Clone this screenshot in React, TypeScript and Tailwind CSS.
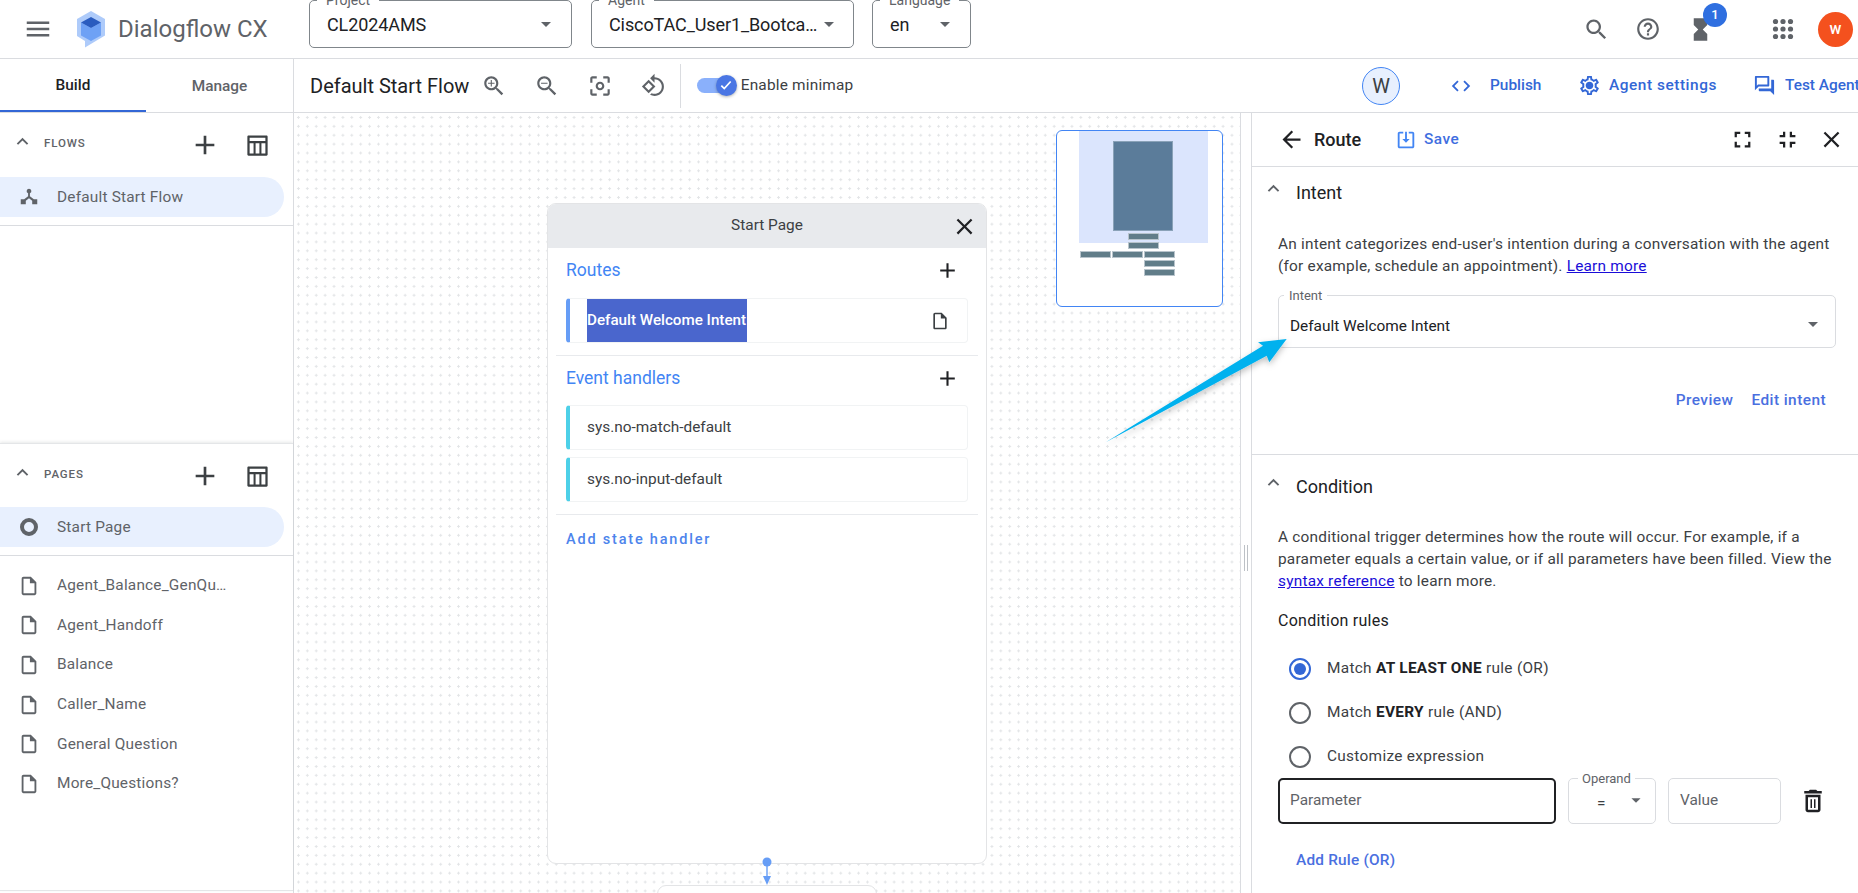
import React from "react";

const P = {
  menu: "M3 18h18v-2H3v2zm0-5h18v-2H3v2zm0-7v2h18V6H3z",
  search: "M15.5 14h-.79l-.28-.27C15.41 12.59 16 11.11 16 9.5 16 5.91 13.09 3 9.5 3S3 5.91 3 9.5 5.91 16 9.5 16c1.61 0 3.09-.59 4.23-1.57l.27.28v.79l5 4.99L20.49 19l-4.99-5zm-6 0C7.01 14 5 11.99 5 9.5S7.01 5 9.5 5 14 7.01 14 9.5 11.99 14 9.5 14z",
  help: "M11 18h2v-2h-2v2zm1-16C6.48 2 2 6.48 2 12s4.48 10 10 10 10-4.48 10-10S17.52 2 12 2zm0 18c-4.41 0-8-3.59-8-8s3.59-8 8-8 8 3.59 8 8-3.59 8-8 8zm0-14c-2.21 0-4 1.79-4 4h2c0-1.1.9-2 2-2s2 .9 2 2c0 2-3 1.75-3 5h2c0-2.25 3-2.5 3-5 0-2.21-1.79-4-4-4z",
  hourglass: "M6 2v6h.01L6 8.01 10 12l-4 4 .01.01H6V22h12v-5.99h-.01L18 16l-4-4 4-3.99-.01-.01H18V2H6z",
  add: "M19 13h-6v6h-2v-6H5v-2h6V5h2v6h6v2z",
  close: "M19 6.41L17.59 5 12 10.59 6.41 5 5 6.41 10.59 12 5 17.59 6.41 19 12 13.41 17.59 19 19 17.59 13.41 12z",
  less: "M12 8l-6 6 1.41 1.41L12 10.83l4.59 4.58L18 14z",
  back: "M20 11H7.83l5.59-5.59L12 4l-8 8 8 8 1.41-1.41L7.83 13H20v-2z",
  full: "M7 14H5v5h5v-2H7v-3zm-2-4h2V7h3V5H5v5zm12 7h-3v2h5v-5h-2v3zM14 5v2h3v3h2V5h-5z",
  exit: "M5 16h3v3h2v-5H5v2zm3-8H5v2h5V5H8v3zm6 11h2v-3h3v-2h-5v5zm2-11V5h-2v5h5V8h-3z",
  file: "M14 2H6c-1.1 0-1.99.9-1.99 2L4 20c0 1.1.89 2 1.99 2H18c1.1 0 2-.9 2-2V8l-6-6zM6 20V4h7v5h5v11H6z",
  zoomIn: "M15.5 14h-.79l-.28-.27C15.41 12.59 16 11.11 16 9.5 16 5.91 13.09 3 9.5 3S3 5.91 3 9.5 5.91 16 9.5 16c1.61 0 3.09-.59 4.23-1.57l.27.28v.79l5 4.99L20.49 19l-4.99-5zm-6 0C7.01 14 5 11.99 5 9.5S7.01 5 9.5 5 14 7.01 14 9.5 11.99 14 9.5 14zm3-4h-2.5v2.5H9V10H6.5V9H9V6.5h1V9h2.5v1z",
  zoomOut: "M15.5 14h-.79l-.28-.27C15.41 12.59 16 11.11 16 9.5 16 5.91 13.09 3 9.5 3S3 5.91 3 9.5 5.91 16 9.5 16c1.61 0 3.09-.59 4.23-1.57l.27.28v.79l5 4.99L20.49 19l-4.99-5zm-6 0C7.01 14 5 11.99 5 9.5S7.01 5 9.5 5 14 7.01 14 9.5 11.99 14 9.5 14zM6.5 9h6v1h-6z",
  focus: "M5 15H3v4c0 1.1.9 2 2 2h4v-2H5v-4zM5 5h4V3H5c-1.1 0-2 .9-2 2v4h2V5zm14-2h-4v2h4v4h2V5c0-1.1-.9-2-2-2zm0 16h-4v2h4c1.1 0 2-.9 2-2v-4h-2v4zM12 8c-2.21 0-4 1.79-4 4s1.79 4 4 4 4-1.79 4-4-1.79-4-4-4zm0 6c-1.1 0-2-.9-2-2s.9-2 2-2 2 .9 2 2-.9 2-2 2z",
  rotate: "M7.34 6.41L.86 12.9l6.49 6.48 6.49-6.48-6.5-6.49zM3.69 12.9l3.66-3.66L11 12.9l-3.66 3.66-3.65-3.66zm15.67-6.26C17.61 4.88 15.3 4 13 4V.76L8.76 5 13 9.24V6c1.79 0 3.58.68 4.95 2.05 2.73 2.73 2.73 7.17 0 9.9C16.58 19.32 14.79 20 13 20c-.97 0-1.94-.21-2.84-.61l-1.49 1.49C10.02 21.62 11.51 22 13 22c2.3 0 4.61-.88 6.36-2.64 3.52-3.51 3.52-9.21 0-12.72z",
  code: "M9.4 16.6L4.8 12l4.6-4.6L8 6l-6 6 6 6 1.4-1.4zm5.2 0l4.6-4.6-4.6-4.6L16 6l6 6-6 6-1.4-1.4z",
  gear: "M19.43 12.98c.04-.32.07-.64.07-.98 0-.34-.03-.66-.07-.98l2.11-1.65c.19-.15.24-.42.12-.64l-2-3.46c-.09-.16-.26-.25-.44-.25-.06 0-.12.01-.17.03l-2.49 1c-.52-.4-1.08-.73-1.69-.98l-.38-2.65C14.46 2.18 14.25 2 14 2h-4c-.25 0-.46.18-.49.42l-.38 2.65c-.61.25-1.17.59-1.69.98l-2.49-1c-.06-.02-.12-.03-.18-.03-.17 0-.34.09-.43.25l-2 3.46c-.13.22-.07.49.12.64l2.11 1.65c-.04.32-.07.65-.07.98 0 .33.03.66.07.98l-2.11 1.65c-.19.15-.24.42-.12.64l2 3.46c.09.16.26.25.44.25.06 0 .12-.01.17-.03l2.49-1c.52.4 1.08.73 1.69.98l.38 2.65c.03.24.24.42.49.42h4c.25 0 .46-.18.49-.42l.38-2.65c.61-.25 1.17-.59 1.69-.98l2.49 1c.06.02.12.03.18.03.17 0 .34-.09.43-.25l2-3.46c.12-.22.07-.49-.12-.64l-2.11-1.65zm-1.98-1.71c.04.31.05.52.05.73 0 .21-.02.43-.05.73l-.14 1.13.89.7 1.08.84-.7 1.21-1.27-.51-1.04-.42-.9.68c-.43.32-.84.56-1.25.73l-1.06.43-.16 1.13-.2 1.35h-1.4l-.19-1.35-.16-1.13-1.06-.43c-.43-.18-.83-.41-1.23-.71l-.91-.7-1.06.43-1.27.51-.7-1.21 1.08-.84.89-.7-.14-1.13c-.03-.31-.05-.54-.05-.74s.02-.43.05-.73l.14-1.13-.89-.7-1.08-.84.7-1.21 1.27.51 1.04.42.9-.68c.43-.32.84-.56 1.25-.73l1.06-.43.16-1.13.2-1.35h1.39l.19 1.35.16 1.13 1.06.43c.43.18.83.41 1.23.71l.91.7 1.06-.43 1.27-.51.7 1.21-1.07.85-.89.7.14 1.13zM12 8c-2.21 0-4 1.79-4 4s1.79 4 4 4 4-1.79 4-4-1.79-4-4-4z",
  chat: "M15 4v7H5.17L4 12.17V4h11m1-2H3c-.55 0-1 .45-1 1v14l4-4h10c.55 0 1-.45 1-1V3c0-.55-.45-1-1-1zm5 4h-2v9H6v2c0 .55.45 1 1 1h11l4 4V7c0-.55-.45-1-1-1z",
  trash: "M6 19c0 1.1.9 2 2 2h8c1.1 0 2-.9 2-2V7H6v12zM8 9h8v10H8V9zm7.5-5l-1-1h-5l-1 1H5v2h14V4h-3.5zM10 10.5h1.2v7H10zM12.8 10.5H14v7h-1.2z",
  caret: "M7 10l5 5 5-5z",
  save: "M5 3h4v2H5v14h14V5h-4V3h4c1.1 0 2 .9 2 2v14c0 1.1-.9 2-2 2H5c-1.1 0-2-.9-2-2V5c0-1.1.9-2 2-2zm6 0h2v8h3l-4 4-4-4h3V3z",
  table: "M4 3h16c.55 0 1 .45 1 1v16c0 .55-.45 1-1 1H4c-.55 0-1-.45-1-1V4c0-.55.45-1 1-1zm1 2v3h14V5H5zm0 5v9h3.5v-9H5zm5.3 0v9h3.4v-9h-3.4zm5.2 0v9H19v-9h-3.5z",
  flow: "M12 3a2.6 2.6 0 0 1 1 5v3.2l4.3 3.3H21V20h-5.5v-4l-3.5-2.7L8.5 16v4H3v-5.5h3.7l4.3-3.3V8a2.6 2.6 0 0 1 1-5z",
};

function Ic({ d, s = 24, c = "text-[#5f6368]" }: { d: string; s?: number; c?: string }) {
  return (
    <svg viewBox="0 0 24 24" width={s} height={s} fill="currentColor" className={`shrink-0 ${c}`}>
      <path d={d} />
    </svg>
  );
}

function TopSelect({ label, value, w, ml }: { label: string; value: string; w: string; ml: string }) {
  return (
    <div className={`relative h-[48px] self-start shrink-0 rounded-[5px] border border-[#80868b] ${w} ${ml}`}>
      <span className="absolute left-[7px] top-[-9px] bg-white px-[9px] text-[14px] leading-[16px] text-[#5f6368]">{label}</span>
      <div className="flex h-full items-center pl-[17px] pr-[13px]">
        <span className="flex-1 whitespace-nowrap text-[18px] tracking-[-0.1px] text-[#202124]">{value}</span>
        <Ic d={P.caret} s={24} />
      </div>
    </div>
  );
}

function SectionHead({ title }: { title: string }) {
  return (
    <div className="flex h-[60px] items-center">
      <div className="ml-[11px] -mt-[4px]"><Ic d={P.less} s={23} /></div>
      <span className="ml-[10px] w-[134px] pt-[1px] text-[11.5px] font-medium tracking-[0.9px] text-[#5f6368]">{title}</span>
      <div className="mt-[4px] flex w-[53px] justify-center"><Ic d={P.add} s={32} c="text-[#3c4043]" /></div>
      <div className="mt-[4px] flex w-[53px] justify-center"><Ic d={P.table} s={27} c="text-[#3c4043]" /></div>
    </div>
  );
}

function SelectedRow({ icon, text }: { icon: React.ReactNode; text: string }) {
  return (
    <div className="flex h-[40px] w-[284px] items-center rounded-r-[20px] bg-[#e8f0fe]">
      <div className="flex w-[57px] justify-center">{icon}</div>
      <span className="pt-[1px] text-[15.4px] tracking-[0.2px] text-[#5f6368]">{text}</span>
    </div>
  );
}

const pages = ["Agent_Balance_GenQu…", "Agent_Handoff", "Balance", "Caller_Name", "General Question", "More_Questions?"];

function Sidebar() {
  return (
    <aside className="w-[294px] shrink-0 border-r border-[#dadce0] bg-white">
      <div className="h-[330px]">
        <SectionHead title="FLOWS" />
        <div className="pt-[4px] pb-[8px] border-b border-[#dadce0]">
          <SelectedRow icon={<Ic d={P.flow} s={22} />} text="Default Start Flow" />
        </div>
      </div>
      <div className="h-[448px] border-t border-b border-[#e4e6e8] shadow-[0_-1px_3px_rgba(60,64,67,0.12)]">
        <SectionHead title="PAGES" />
        <div className="mt-[3px] pb-[8px] border-b border-[#dadce0]">
          <SelectedRow
            icon={<span className="block h-[18px] w-[18px] rounded-full border-[4px] border-[#5f6368]" />}
            text="Start Page"
          />
        </div>
        <div className="pt-[10px]">
          {pages.map((p) => (
            <div key={p} className="flex h-[39.6px] items-center">
              <div className="flex w-[57px] justify-center"><Ic d={P.file} s={22} /></div>
              <span className="text-[15.4px] tracking-[0.2px] text-[#5f6368]">{p}</span>
            </div>
          ))}
        </div>
      </div>
    </aside>
  );
}

function Handler({ text, bar, children }: { text: string; bar: string; children?: React.ReactNode }) {
  return (
    <div className={`flex h-[45px] items-center rounded-[4px] border border-[#f1f3f4] border-l-[4px] ${bar}`}>
      {children ?? <span className="pl-[17px] pt-[1px] text-[15.4px] text-[#3c4043]">{text}</span>}
    </div>
  );
}

function StartPageCard() {
  return (
    <div className="absolute left-[253px] top-[90px] h-[661px] w-[440px] rounded-[9px] border border-[#e3e4e6] bg-white">
      <div className="relative flex h-[44px] items-center justify-center rounded-t-[8px] bg-[#e8eaed] text-[15.4px] text-[#3c4043]">
        Start Page
        <div className="absolute left-[403px] top-[9px]"><Ic d={P.close} s={27} c="text-[#202124]" /></div>
      </div>
      <div className="px-[18px]">
        <div className="flex h-[50px] items-center justify-between pb-[6px] pr-[8px]">
          <span className="text-[17.5px] text-[#4285f4]">Routes</span>
          <Ic d={P.add} s={25} c="text-[#202124]" />
        </div>
        <Handler text="" bar="border-l-[#669df6]">
          <span className="ml-[17px] flex h-full w-[160px] items-center whitespace-nowrap bg-[#4a66cd] text-[15.2px] font-medium text-white">Default Welcome Intent</span>
          <div className="ml-auto mr-[17px]"><Ic d={P.file} s={20} c="text-[#3c4043]" /></div>
        </Handler>
      </div>
      <div className="mx-[8px] mt-[12px] border-t border-[#e8eaed]" />
      <div className="px-[18px]">
        <div className="flex h-[49px] items-center justify-between pb-[4px] pr-[8px]">
          <span className="text-[17.5px] text-[#4285f4]">Event handlers</span>
          <Ic d={P.add} s={25} c="text-[#202124]" />
        </div>
        <div className="flex flex-col gap-[7px]">
          <Handler text="sys.no-match-default" bar="border-l-[#4dd0e8]" />
          <Handler text="sys.no-input-default" bar="border-l-[#4dd0e8]" />
        </div>
      </div>
      <div className="mx-[8px] mt-[12px] border-t border-[#e8eaed]" />
      <div className="px-[18px] pt-[14px] text-[14.5px] font-medium tracking-[1.8px] text-[#4d84ec]">Add state handler</div>
    </div>
  );
}

function Minimap() {
  const bar = "absolute h-[7px] w-[31px] bg-[#617d89] border border-[#b8c4cc]";
  return (
    <div className="absolute left-[762px] top-[17px] h-[177px] w-[167px] rounded-[6px] border border-[#4285f4] bg-white">
      <div className="absolute left-[22px] top-0 h-[112px] w-[129px] bg-[#dbe5fd]" />
      <div className="absolute left-[56px] top-[10px] h-[90px] w-[60px] border border-[#8aa2b8] bg-[#5b7c9a]" />
      <div className={`${bar} left-[71px] top-[102px] bg-[#5b7c9a]`} />
      <div className={`${bar} left-[71px] top-[111px]`} />
      <div className={`${bar} left-[23px] top-[120px]`} />
      <div className={`${bar} left-[55px] top-[120px]`} />
      <div className={`${bar} left-[87px] top-[120px]`} />
      <div className={`${bar} left-[87px] top-[129px]`} />
      <div className={`${bar} left-[87px] top-[138px]`} />
    </div>
  );
}

function Canvas() {
  return (
    <main className="relative w-[947px] shrink-0 overflow-hidden border-r border-[#dadce0] bg-white bg-[radial-gradient(#e3e5e7_1px,transparent_1.2px)] bg-[size:8.9px_8.9px]">
      <StartPageCard />
      <svg className="absolute left-[465px] top-[744px]" width="16" height="30" viewBox="0 0 16 30">
        <circle cx="8" cy="5" r="4.5" fill="#669df6" />
        <rect x="7.3" y="5" width="1.4" height="16" fill="#669df6" />
        <path d="M4 19h8l-4 9z" fill="#669df6" />
      </svg>
      <div className="absolute left-[363px] top-[772px] h-[40px] w-[220px] rounded-[9px] border border-[#e3e4e6] bg-white" />
      <Minimap />
    </main>
  );
}

function Radio({ on, children }: { on?: boolean; children: React.ReactNode }) {
  return (
    <div className="flex h-[44px] items-center pl-[11px]">
      <span className={`flex h-[22px] w-[22px] items-center justify-center rounded-full border-2 ${on ? "border-[#3367d6]" : "border-[#5f6368]"}`}>
        {on && <span className="h-[12px] w-[12px] rounded-full bg-[#3367d6]" />}
      </span>
      <span className="ml-[16px] text-[15.4px] tracking-[0.3px] text-[#3c4043]">{children}</span>
    </div>
  );
}

function PanelSectionTitle({ children, h }: { children: string; h: string }) {
  return (
    <div className={`flex items-center ${h}`}>
      <div className="ml-[10px] -mt-[8px]"><Ic d={P.less} s={23} /></div>
      <span className="ml-[11px] text-[18px] text-[#202124]">{children}</span>
    </div>
  );
}

function Panel() {
  return (
    <section className="flex-1 overflow-hidden border-l border-[#dadce0] bg-white">
      <div className="flex h-[54px] items-center border-b border-[#dadce0]">
        <div className="ml-[26px]"><Ic d={P.back} s={27} c="text-[#202124]" /></div>
        <span className="ml-[9px] w-[57px] text-[18px] font-medium text-[#202124]">Route</span>
        <div className="ml-[24px]"><Ic d={P.save} s={22} c="text-[#4285f4]" /></div>
        <span className="ml-[7px] text-[15.4px] font-medium tracking-[0.5px] text-[#3f6ee0]">Save</span>
        <div className="ml-auto flex">
          <div className="flex w-[44.5px] justify-center"><Ic d={P.full} s={27} c="text-[#202124]" /></div>
          <div className="flex w-[44.5px] justify-center"><Ic d={P.exit} s={27} c="text-[#202124]" /></div>
          <div className="mr-[4px] flex w-[44.5px] justify-center"><Ic d={P.close} s={27} c="text-[#202124]" /></div>
        </div>
      </div>

      <div className="h-[288px] border-b border-[#dadce0]">
        <PanelSectionTitle h="h-[51px]">Intent</PanelSectionTitle>
        <div className="ml-[26px] mr-[19px]">
          <p className="mt-[15px] text-[15.4px] leading-[22px] tracking-[0.22px] text-[#3c4043]">
            An intent categorizes end-user's intention during a conversation with the agent (for example, schedule an appointment). <a className="text-[#1a0dd8] underline">Learn more</a>
          </p>
          <div className="relative mt-[18px] flex h-[53px] w-[558px] items-center rounded-[5px] border border-[#dadce0] pl-[11px] pr-[10px]">
            <span className="absolute left-[5px] top-[-8px] bg-white px-[5px] text-[13px] leading-[15px] text-[#5f6368]">Intent</span>
            <span className="flex-1 pt-[10px] text-[15.4px] text-[#202124]">Default Welcome Intent</span>
            <div className="pt-[5px]"><Ic d={P.caret} s={24} /></div>
          </div>
          <div className="mt-[40px] flex justify-end gap-[18px] pr-[13px] text-[15.4px] font-medium leading-[24px] tracking-[0.45px] text-[#4a6fe0]">
            <span>Preview</span>
            <span>Edit intent</span>
          </div>
        </div>
      </div>

      <PanelSectionTitle h="h-[62px]">Condition</PanelSectionTitle>
      <div className="ml-[26px] mr-[18px]">
        <p className="mt-[9px] text-[15.4px] leading-[22px] tracking-[0.22px] text-[#3c4043]">
          A conditional trigger determines how the route will occur. For example, if a parameter equals a certain value, or if all parameters have been filled. View the <a className="text-[#1a0dd8] underline">syntax reference</a> to learn more.
        </p>
        <div className="mt-[17px] text-[16px] leading-[24px] tracking-[0.25px] text-[#202124]">Condition rules</div>
        <div className="mt-[14px]">
          <Radio on>Match <b className="font-bold text-[#202124]">AT LEAST ONE</b> rule (OR)</Radio>
          <Radio>Match <b className="font-bold text-[#202124]">EVERY</b> rule (AND)</Radio>
          <Radio>Customize expression</Radio>
        </div>
        <div className="-mt-[1px] flex h-[46px]">
          <div className="flex w-[278px] items-center rounded-[5px] border-2 border-[#202124] pl-[10px] text-[15.4px] text-[#5f6368]">Parameter</div>
          <div className="relative ml-[12px] flex w-[88px] items-center rounded-[5px] border border-[#dadce0]">
            <span className="absolute left-[9px] top-[-8px] bg-white px-[4px] text-[13px] leading-[15px] text-[#5f6368]">Operand</span>
            <span className="ml-[28px] mt-[6px] text-[15.4px] text-[#3c4043]">=</span>
            <div className="ml-auto mr-[8px] -mt-[2px]"><Ic d={P.caret} s={22} /></div>
          </div>
          <div className="ml-[12px] flex w-[113px] items-center rounded-[5px] border border-[#dadce0] pl-[11px] text-[15.4px] text-[#5f6368]">Value</div>
          <div className="ml-[17px] flex items-center"><Ic d={P.trash} s={30} c="text-[#202124]" /></div>
        </div>
        <div className="ml-[18px] mt-[24px] text-[15.4px] font-medium leading-[24px] tracking-[0.2px] text-[#4a6fe0]">Add Rule (OR)</div>
      </div>
    </section>
  );
}

function TopBar() {
  return (
    <header className="flex h-[59px] shrink-0 items-center border-b border-[#dadce0] bg-white">
      <div className="ml-[23px]"><Ic d={P.menu} s={30} /></div>
      <svg className="ml-[24px]" width="28" height="37" viewBox="0 0 28 37">
        <path d="M14 0l14 8v16.5L8 36.5v-6.6L0 25V8z" fill="#aecbfa" />
        <path d="M4 11.5l10 5.5 10-5.5v13L14 30 4 24.5z" fill="#6ea1f5" />
        <path d="M14 6l10 5.5-10 5.5-10-5.5z" fill="#2a5cbf" />
      </svg>
      <div className="ml-[13px] w-[191px] text-[24px] text-[#5f6368]">Dialogflow CX</div>
      <TopSelect label="Project" value="CL2024AMS" w="w-[263px]" ml="" />
      <TopSelect label="Agent" value="CiscoTAC_User1_Bootca…" w="w-[263px]" ml="ml-[19px]" />
      <TopSelect label="Language" value="en" w="w-[99px]" ml="ml-[18px]" />
      <div className="ml-auto mr-[5px] flex items-center">
        <Ic d={P.search} s={27} />
        <div className="ml-[25px]"><Ic d={P.help} s={26} /></div>
        <div className="relative ml-[26px]">
          <Ic d={P.hourglass} s={27} />
          <span className="absolute left-[16px] top-[-13px] flex h-[24px] w-[24px] items-center justify-center rounded-full bg-[#2f6fe0] text-[13px] font-medium text-white">1</span>
        </div>
        <svg className="ml-[55px] text-[#5f6368]" width="28" height="28" viewBox="0 0 28 28" fill="currentColor">
          {[6.5, 14, 21.5].flatMap((y) => [6.5, 14, 21.5].map((x) => <circle key={`${x}-${y}`} cx={x} cy={y} r="2.6" />))}
        </svg>
        <span className="ml-[21px] flex h-[35px] w-[35px] items-center justify-center rounded-full bg-[#f4511e] text-[16px] font-medium text-white">w</span>
      </div>
    </header>
  );
}

function ToolBar() {
  return (
    <div className="flex h-[54px] shrink-0 border-b border-[#dadce0] bg-white">
      <div className="flex w-[294px] shrink-0 border-r border-[#dadce0] text-[15.4px] font-medium">
        <div className="flex w-[146px] items-center justify-center border-b-2 border-[#3367d6] pt-[2px] text-[#202124]">Build</div>
        <div className="flex flex-1 items-center justify-center pt-[2px] text-[#5f6368]">Manage</div>
      </div>
      <div className="flex flex-1 items-center">
        <div className="w-[172.5px] shrink-0 pl-[16px] whitespace-nowrap text-[20px] text-[#202124]">Default Start Flow</div>
        <div className="flex w-[53.3px] justify-center pl-[1px]"><Ic d={P.zoomIn} s={26} /></div>
        <div className="flex w-[53.3px] justify-center pl-[1px]"><Ic d={P.zoomOut} s={26} /></div>
        <div className="flex w-[53.3px] justify-center"><Ic d={P.focus} s={26} /></div>
        <div className="flex w-[53.3px] justify-center"><Ic d={P.rotate} s={25} /></div>
        <div className="h-[44px] w-px bg-[#dadce0]" />
        <div className="flex flex-1 items-center">
          <div className="relative ml-[16px] h-[15px] w-[30px] rounded-full bg-[#8ab0fb]">
            <span className="absolute left-[19px] top-[-3px] flex h-[21px] w-[21px] items-center justify-center rounded-full bg-[#4a76e4] shadow-[0_1px_3px_rgba(60,64,67,0.4)]">
              <svg width="14" height="14" viewBox="0 0 24 24" fill="none" stroke="white" strokeWidth="3"><path d="M4 13l5 5L20 6" /></svg>
            </span>
          </div>
          <span className="ml-[14px] text-[15.4px] tracking-[0.2px] text-[#3c4043]">Enable minimap</span>
        </div>
        <span className="flex h-[38px] w-[38px] items-center justify-center rounded-full border border-[#4285f4] bg-[#e8f0fe] text-[20px] text-[#3c4043]">W</span>
        <div className="ml-[50px]"><Ic d={P.code} s={22} c="text-[#3367d6]" /></div>
        <span className="ml-[18px] w-[52px] text-[15.4px] font-medium text-[#3367d6]">Publish</span>
        <div className="ml-[36px]"><Ic d={P.gear} s={23} c="text-[#3367d6]" /></div>
        <span className="ml-[8px] w-[109px] whitespace-nowrap text-[15.4px] font-medium tracking-[0.55px] text-[#3367d6]">Agent settings</span>
        <div className="ml-[35px]"><Ic d={P.chat} s={23} c="text-[#3367d6]" /></div>
        <span className="ml-[9px] w-[73px] shrink-0 overflow-hidden whitespace-nowrap text-[15.4px] font-medium text-[#3367d6]">Test Agent</span>
      </div>
    </div>
  );
}

export default function App() {
  return (
    <div className="relative flex h-[893px] w-[1858px] flex-col overflow-hidden bg-white font-['Roboto',sans-serif]">
      <TopBar />
      <ToolBar />
      <div className="flex min-h-0 flex-1">
        <Sidebar />
        <Canvas />
        <div className="flex w-[10px] shrink-0 items-start justify-center gap-[2px] pt-[432px]">
          <span className="h-[26px] w-px bg-[#bdc1c6]" />
          <span className="h-[26px] w-px bg-[#bdc1c6]" />
        </div>
        <Panel />
      </div>
      <svg className="pointer-events-none absolute left-[1100px] top-[335px]" width="195" height="112" viewBox="1100 335 195 112">
        <defs>
          <filter id="sh" x="-10%" y="-10%" width="120%" height="130%">
            <feDropShadow dx="0" dy="3" stdDeviation="3" floodColor="#000" floodOpacity="0.25" />
          </filter>
        </defs>
        <path d="M1105.7 442.3L1263 345.7l-5-3.4 28.7-3.3-17.4 23.3-2.6-6.6z" fill="#06b1ee" filter="url(#sh)" />
      </svg>
    </div>
  );
}
